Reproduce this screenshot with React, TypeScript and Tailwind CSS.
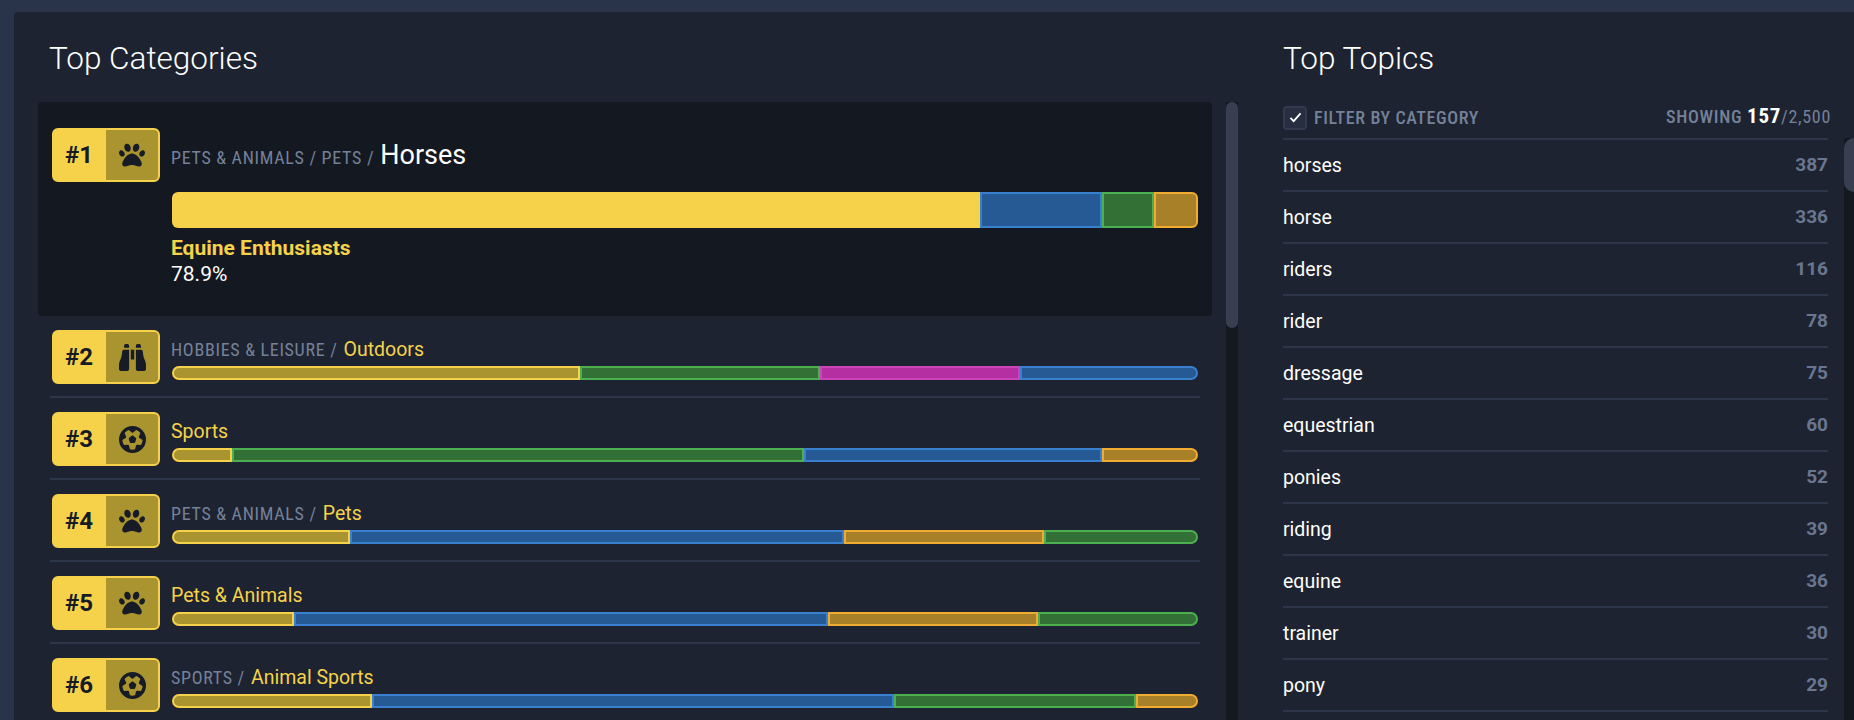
import { FaPaw, FaFutbol } from "react-icons/fa6";
import type { ComponentType } from "react";

type Seg = { c: "y" | "g" | "b" | "o" | "m"; w: number };
type IconT = ComponentType<{ size?: number }>;
const segClass = {
  y: "bg-[#aa9430] border-[#f5d24a]",
  g: "bg-[#327035] border-[#4caf50]",
  b: "bg-[#265a94] border-[#3a80d0]",
  o: "bg-[#a88028] border-[#f0ab32]",
  m: "bg-[#b52fa3] border-[#cc44b8]",
};

function Binoculars({ size = 27 }: { size?: number }) {
  return (
    <svg width={size} height={size} viewBox="0 32 512 448" preserveAspectRatio="none" fill="currentColor">
      <path d="M128 32h32c17.7 0 32 14.3 32 32V96H96V64c0-17.7 14.3-32 32-32zm64 96V448c0 17.7-14.3 32-32 32H32c-17.7 0-32-14.3-32-32V388.9c0-34.6 9.4-68.6 27.2-98.3C40.9 267.8 49.7 242.4 53 216L60.5 156c2-16 15.6-28 31.8-28H192zm227.8 0c16.1 0 29.8 12 31.8 28L459 216c3.3 26.4 12.1 51.8 25.8 74.6c17.8 29.7 27.2 63.7 27.2 98.3V448c0 17.7-14.3 32-32 32H352c-17.7 0-32-14.3-32-32V128h99.8zM320 64c0-17.7 14.3-32 32-32h32c17.7 0 32 14.3 32 32V96H320V64zm-32 64V288H224V128h64z" />
    </svg>
  );
}

const rows = [
  { n: 2, icon: Binoculars, sz: 27, crumb: "HOBBIES & LEISURE /", name: "Outdoors", segs: [{ c: "y", w: 408 }, { c: "g", w: 240 }, { c: "m", w: 200 }, { c: "b", w: 178 }] },
  { n: 3, icon: FaFutbol, sz: 27, crumb: "", name: "Sports", segs: [{ c: "y", w: 60 }, { c: "g", w: 572 }, { c: "b", w: 298 }, { c: "o", w: 96 }] },
  { n: 4, icon: FaPaw, sz: 26, crumb: "PETS & ANIMALS /", name: "Pets", segs: [{ c: "y", w: 178 }, { c: "b", w: 494 }, { c: "o", w: 200 }, { c: "g", w: 154 }] },
  { n: 5, icon: FaPaw, sz: 26, crumb: "", name: "Pets & Animals", segs: [{ c: "y", w: 122 }, { c: "b", w: 534 }, { c: "o", w: 210 }, { c: "g", w: 160 }] },
  { n: 6, icon: FaFutbol, sz: 27, crumb: "SPORTS /", name: "Animal Sports", segs: [{ c: "y", w: 200 }, { c: "b", w: 522 }, { c: "g", w: 242 }, { c: "o", w: 62 }] },
] as { n: number; icon: IconT; sz: number; crumb: string; name: string; segs: Seg[] }[];

const topics: [string, number][] = [
  ["horses", 387], ["horse", 336], ["riders", 116], ["rider", 78], ["dressage", 75], ["equestrian", 60],
  ["ponies", 52], ["riding", 39], ["equine", 36], ["trainer", 30], ["pony", 29],
];

function Badge({ n, icon: Icon, sz }: { n: number; icon: IconT; sz: number }) {
  return (
    <div className="flex h-[54px] w-[108px] shrink-0 rounded-md border-2 border-[#f5d24a] bg-[#f5d24a]">
      <div className="flex w-[52px] items-center justify-center pr-[2px] text-[24px] font-bold text-[#161b26]">#{n}</div>
      <div className="flex flex-1 items-center justify-center rounded-r bg-[#aa9430] text-[#161b26]">
        <Icon size={sz} />
      </div>
    </div>
  );
}

function Bar({ segs }: { segs: Seg[] }) {
  return (
    <div className="flex h-[14px] w-[1026px]">
      {segs.map((s, i) => (
        <div
          key={i}
          style={{ width: s.w }}
          className={`shrink-0 border-2 ${segClass[s.c]} ${i === 0 ? "rounded-l-[7px]" : ""} ${i === segs.length - 1 ? "rounded-r-[7px]" : ""}`}
        />
      ))}
    </div>
  );
}

export default function App() {
  return (
    <div className="flex h-[720px] flex-col overflow-hidden bg-[#29334a] pt-3 pl-[14px] font-['Roboto',sans-serif]">
      <div className="flex h-[708px] rounded-tl bg-[#1d2330]">
        <div className="flex w-[1269px] shrink-0 flex-col pl-6">
          <div className="flex h-[90px] shrink-0 items-start pl-[11px] pt-[27px] text-[31.5px] leading-[40px] font-light text-white">Top Categories</div>
          <div className="flex min-h-0 flex-1 gap-[14px]">
            <div className="flex w-[1174px] shrink-0 flex-col">
              <div className="flex h-[214px] shrink-0 gap-[11px] rounded bg-[#141821] pt-[26px] pl-[14px]">
                <Badge n={1} icon={FaPaw} sz={26} />
                <div className="flex flex-col">
                  <div className="flex h-[54px] items-baseline gap-[6px] pt-[11px]">
                    <span className="text-[18px] leading-[24px] tracking-[0.7px] text-[#758199] [font-stretch:75%]">PETS &amp; ANIMALS / PETS /</span>
                    <span className="text-[27px] leading-[32px] text-white">Horses</span>
                  </div>
                  <div className="ml-px mt-[10px] flex h-[36px] w-[1026px]">
                    <div className="w-[808px] rounded-l-md bg-[#f5d24a]" />
                    <div className="w-[122px] border-2 border-[#3a80d0] bg-[#265a94]" />
                    <div className="w-[52px] border-2 border-[#4caf50] bg-[#327035]" />
                    <div className="w-[44px] rounded-r-md border-2 border-[#f0ab32] bg-[#a88028]" />
                  </div>
                  <div className="mt-2 text-[21px] leading-[24px] font-bold text-[#f5d24a]">Equine Enthusiasts</div>
                  <div className="text-[21px] leading-[28px] text-white">78.9%</div>
                </div>
              </div>
              <div className="flex flex-col px-3 pt-[14px]">
                {rows.map((r) => (
                  <div key={r.n} className="mb-[14px] flex h-[68px] shrink-0 gap-[11px] border-b-2 border-[#2d3548] pl-[2px]">
                    <Badge n={r.n} icon={r.icon} sz={r.sz} />
                    <div className="flex flex-col">
                      <div className="flex h-[36px] items-baseline gap-[6px] pt-[8px]">
                        {r.crumb && <span className="text-[18px] leading-[24px] tracking-[0.7px] text-[#758199] [font-stretch:75%]">{r.crumb}</span>}
                        <span className="text-[19.5px] leading-[24px] text-[#f5d24a]">{r.name}</span>
                      </div>
                      <div className="ml-px">
                        <Bar segs={r.segs} />
                      </div>
                    </div>
                  </div>
                ))}
              </div>
            </div>
            <div className="w-3 shrink-0 bg-[#14181f]">
              <div className="h-[226px] rounded-full bg-[#373f50]" />
            </div>
          </div>
        </div>
        <div className="flex flex-1 flex-col">
          <div className="flex h-[90px] shrink-0 items-start pt-[27px] text-[31.5px] leading-[40px] font-light text-white">Top Topics</div>
          <div className="flex h-[36px] w-[548px] shrink-0 items-start justify-between pt-[2px]">
            <div className="flex items-center gap-[7px]">
              <div className="flex h-6 w-6 items-center justify-center rounded-sm border-2 border-[#313a4e] bg-[#262e3f]">
                <svg width="13" height="11" viewBox="0 0 14 12" fill="none" stroke="white" strokeWidth="2"><path d="M1.5 6.5 5 10l7.5-8.5" /></svg>
              </div>
              <span className="text-[18px] font-medium tracking-[0.6px] text-[#758199] [font-stretch:75%]">FILTER BY CATEGORY</span>
            </div>
            <div className="flex h-6 items-center pt-px text-[18px] font-medium tracking-[0.7px] text-[#758199] [font-stretch:75%]">
              <span>SHOWING&nbsp;</span>
              <span className="text-[21px] font-bold text-white">157</span>
              <span className="font-normal">/2,500</span>
            </div>
          </div>
          <div className="flex min-h-0 flex-1 justify-between">
            <div className="w-[545px] shrink-0 border-t-2 border-[#2d3548]">
              {topics.map(([t, c]) => (
                <div key={t} className="flex h-[52px] items-center justify-between border-b-2 border-[#2d3548]">
                  <span className="mt-[2px] text-[19.5px] text-white">{t}</span>
                  <span className="text-[19px] font-bold text-[#6a7690]">{c}</span>
                </div>
              ))}
            </div>
            <div className="w-[10px] shrink-0 bg-[#14181f]">
              <div className="h-[54px] rounded-l-full bg-[#373f50]" />
            </div>
          </div>
        </div>
      </div>
    </div>
  );
}
